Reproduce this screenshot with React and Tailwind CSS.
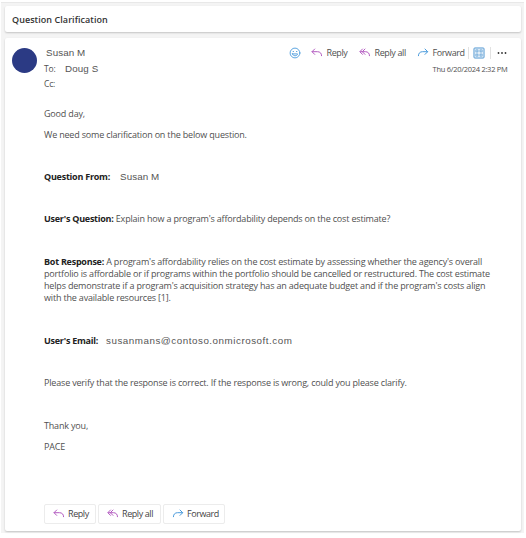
const ReplyIcon = ({ all = false }) => (
  <svg width="12" height="10" viewBox="0 0 12 10" fill="none" stroke="#b35cc0" strokeWidth="1" strokeLinecap="round" strokeLinejoin="round" className="shrink-0">
    {all ? (
      <>
        <path d="M3.500 1 .8 3.700l2.700 2.700" />
        <path d="M6 1 3.300 3.700 6 6.400M1.500 3.700H6.400c2.600 0 4.100 1.600 4.100 4" />
      </>
    ) : (
      <path d="M3.700 1 1 3.700l2.700 2.700M1.200 3.700H6.500c2.500 0 4.100 1.600 4.100 4" />
    )}
  </svg>
);

const ForwardIcon = () => (
  <svg width="12" height="10" viewBox="0 0 12 10" fill="none" stroke="#4a9bdc" strokeWidth="1" strokeLinecap="round" strokeLinejoin="round" className="shrink-0">
    <path d="M8 1l2.700 2.700L8 6.400M10.500 3.700H5.500C3 3.700 1.400 5.300 1.400 7.700" />
  </svg>
);

const SmileIcon = () => (
  <svg width="12" height="12" viewBox="0 0 12 12" fill="none" stroke="#4a9bdc" strokeWidth="0.9" strokeLinecap="round" strokeLinejoin="round" className="shrink-0">
    <circle cx="6" cy="6" r="4.900" />
    <path d="M3.400 6.900h5.200c-.4 2.500-4.800 2.500-5.200 0z" />
    <path d="M4.200 4.500h.2M7.600 4.500h.2" strokeWidth="1.200" />
  </svg>
);

const AppsIcon = () => (
  <svg width="12" height="12" viewBox="0 0 12 12" fill="none" stroke="#4a93d0" className="shrink-0">
    <rect x="1" y="1" width="10" height="10" rx="0.800" fill="#fff" strokeWidth="1" />
    <g strokeWidth="0.8">
      <rect x="2.900" y="2.900" width="2.100" height="2.100" />
      <rect x="7" y="2.900" width="2.100" height="2.100" />
      <rect x="2.900" y="7" width="2.100" height="2.100" />
      <rect x="7" y="7" width="2.100" height="2.100" />
    </g>
  </svg>
);

const Blank = () => <div className="h-[12.2px]" />;

const Name = ({ children, className = "tracking-[0.1px]" }) => (
  <span className={`font-['Liberation_Sans',sans-serif] text-[9.8px] text-[#555] ${className}`}>{children}</span>
);

const Label = ({ children, className = "" }) => (
  <b className={`tracking-[-0.24px] text-[#222] ${className}`}>{children}</b>
);

const Action = ({ icon, label, className }) => (
  <button className={`flex h-5 items-center rounded-[2px] border border-[#ececec] pl-[7.5px] text-[9px] tracking-[-0.42px] text-[#444] ${className}`}>
    {icon}
    <span className="ml-[3.5px] pt-px">{label}</span>
  </button>
);

export default function App() {
  return (
    <div className="h-[538px] w-[526px] overflow-hidden bg-white pl-px pt-[2px] font-['Open_Sans','Noto_Sans',sans-serif] whitespace-nowrap">
      <div className="h-[531px] w-[523px] border-t border-[#e8e8e8] bg-[#f4f4f4] pl-1 pt-[3px]">
        <header className="flex h-[26px] w-[516px] items-center rounded-[2px] bg-white pl-[7px] pt-px text-[9px] font-semibold tracking-[0.06px] text-[#333] shadow-[0_1px_2px_rgba(0,0,0,0.2)]">
          Question Clarification
        </header>
        <main className="mt-[6px] h-[493px] w-[516px] rounded-[2px] bg-white pt-[6px] text-[9px] text-[#505050] shadow-[0_1px_2px_rgba(0,0,0,0.2)]">
          <div className="flex h-[63.5px] pl-[7px]">
            <div className="mt-[4px] size-[25px] rounded-full bg-[#2b3a84]" />
            <div className="ml-[7px] w-[244.5px] leading-[15.5px]">
              <div className="pl-[2px] pt-px"><Name>Susan M</Name></div>
              <div className="flex text-[8.5px] tracking-[-0.2px]"><span className="w-[21px]">To:</span><Name>Doug S</Name></div>
              <div className="text-[8.500px] tracking-[-0.2px]">Cc:</div>
            </div>
            <div className="w-[224px]">
              <div className="flex h-[17px] items-center text-[9px] tracking-[-0.38px]">
                <SmileIcon />
                <div className="ml-[10px] flex items-center"><ReplyIcon /><span className="ml-[4px] w-[21px] pt-px">Reply</span></div>
                <div className="ml-[11px] flex items-center"><ReplyIcon all /><span className="ml-[4px] w-[31px] pt-px">Reply all</span></div>
                <div className="ml-[11px] flex items-center"><ForwardIcon /><span className="ml-[4px] w-[30px] pt-px">Forward</span></div>
                <div className="ml-[5px] h-3 w-px shrink-0 bg-[#e2e2e2]" />
                <div className="ml-[4px]"><AppsIcon /></div>
                <div className="ml-[5px] h-3 w-px shrink-0 bg-[#e2e2e2]" />
                <svg width="10" height="4" viewBox="0 0 10 4" fill="#333" className="ml-[6px] shrink-0"><circle cx="1.500" cy="2" r="0.900" /><circle cx="5" cy="2" r="0.900" /><circle cx="8.500" cy="2" r="0.900" /></svg>
              </div>
              <div className="pr-[5px] text-right text-[7.5px] leading-[16px] tracking-[-0.28px]">Thu 6/20/2024 2:32 PM</div>
            </div>
          </div>
          <article className="flex flex-col gap-[9px] pl-[39px] text-[9px] leading-[12.2px] tracking-[-0.18px]">
            <p>Good day,</p>
            <p>We need some clarification on the below question.</p>
            <Blank />
            <p className="flex h-[12.2px]"><Label className="w-[76px]">Question From:</Label><Name>Susan M</Name></p>
            <Blank />
            <p><Label>User's Question:</Label> Explain how a program's affordability depends on the cost estimate?</p>
            <Blank />
            <p>
              <Label>Bot Response:</Label> A program's affordability relies on the cost estimate by assessing whether the agency's overall<br />
              portfolio is affordable or if programs within the portfolio should be cancelled or restructured. The cost estimate<br />
              helps demonstrate if a program's acquisition strategy has an adequate budget and if the program's costs align<br />
              with the available resources [1].
            </p>
            <Blank />
            <p className="flex h-[12.2px]"><Label className="w-[62px]">User's Email:</Label><Name className="tracking-[0.53px]">susanmans@contoso.onmicrosoft.com</Name></p>
            <Blank />
            <p>Please verify that the response is correct. If the response is wrong, could you please clarify.</p>
            <Blank />
            <p>Thank you,</p>
            <p>PACE</p>
          </article>
          <footer className="mt-[50.5px] flex gap-[2px] pl-[39px]">
            <Action icon={<ReplyIcon />} label="Reply" className="w-[52px]" />
            <Action icon={<ReplyIcon all />} label="Reply all" className="w-[63px]" />
            <Action icon={<ForwardIcon />} label="Forward" className="w-[62px]" />
          </footer>
        </main>
      </div>
    </div>
  );
}
